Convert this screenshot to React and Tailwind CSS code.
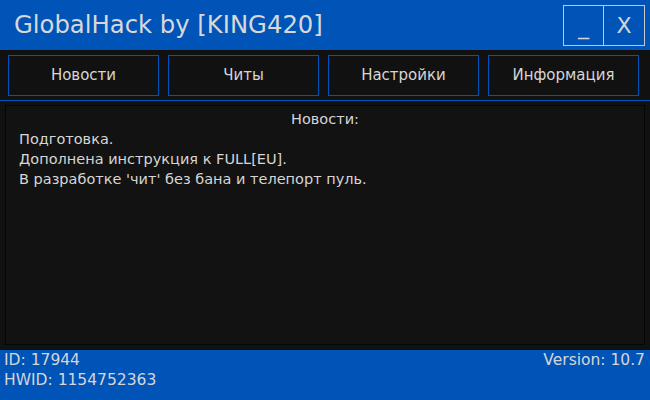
import React from "react";

const tabs = ["Новости", "Читы", "Настройки", "Информация"];

const news = [
  "Подготовка.",
  "Дополнена инструкция к FULL[EU].",
  "В разработке 'чит' без бана и телепорт пуль.",
];

export default function App() {
  return (
    <div
      className="w-[650px] h-[400px] flex flex-col bg-[#111111] text-[#d6d6d6] overflow-hidden"
      style={{ fontFamily: "Tahoma, 'DejaVu Sans', sans-serif" }}
    >
      {/* Title bar */}
      <header className="h-[50px] bg-[#0054b8] flex items-center justify-between pl-[14px] pr-[5px]">
        <h1 className="text-[24.3px] leading-none text-[#d8d8d8]">GlobalHack by [KING420]</h1>
        <div className="flex h-[41px]">
          <button className="w-[41px] h-full border border-[#c8c8c8] text-[22px] leading-none flex items-end justify-center pb-[7px]">
            _
          </button>
          <button className="w-[41px] h-full border border-l-0 border-[#c8c8c8] text-[22px] flex items-center justify-center">
            X
          </button>
        </div>
      </header>

      {/* Tabs */}
      <nav className="flex gap-[9px] pl-[8px] pr-[11px] pt-[5px] pb-[4px] border-b border-[#0054b8]">
        {tabs.map((t) => (
          <button
            key={t}
            className="flex-1 h-[41px] border border-[#0052bf] text-[15px] flex items-center justify-center"
          >
            {t}
          </button>
        ))}
      </nav>

      {/* Content */}
      <main className="flex-1 mx-[5px] mt-[4px] mb-[5px] border border-[#050505] bg-[#121212] px-[13px] pt-[3px]">
        <p className="text-center text-[14.5px] leading-[20px]">Новости:</p>
        {news.map((line) => (
          <p key={line} className="text-[14.5px] leading-[20px]">
            {line}
          </p>
        ))}
      </main>

      {/* Footer */}
      <footer className="h-[50px] bg-[#0054b8] flex justify-between px-[4px] text-[15.5px] leading-[20px]">
        <div>
          <p>ID: 17944</p>
          <p>HWID: 1154752363</p>
        </div>
        <p className="pr-[1px]">Version: 10.7</p>
      </footer>
    </div>
  );
}
